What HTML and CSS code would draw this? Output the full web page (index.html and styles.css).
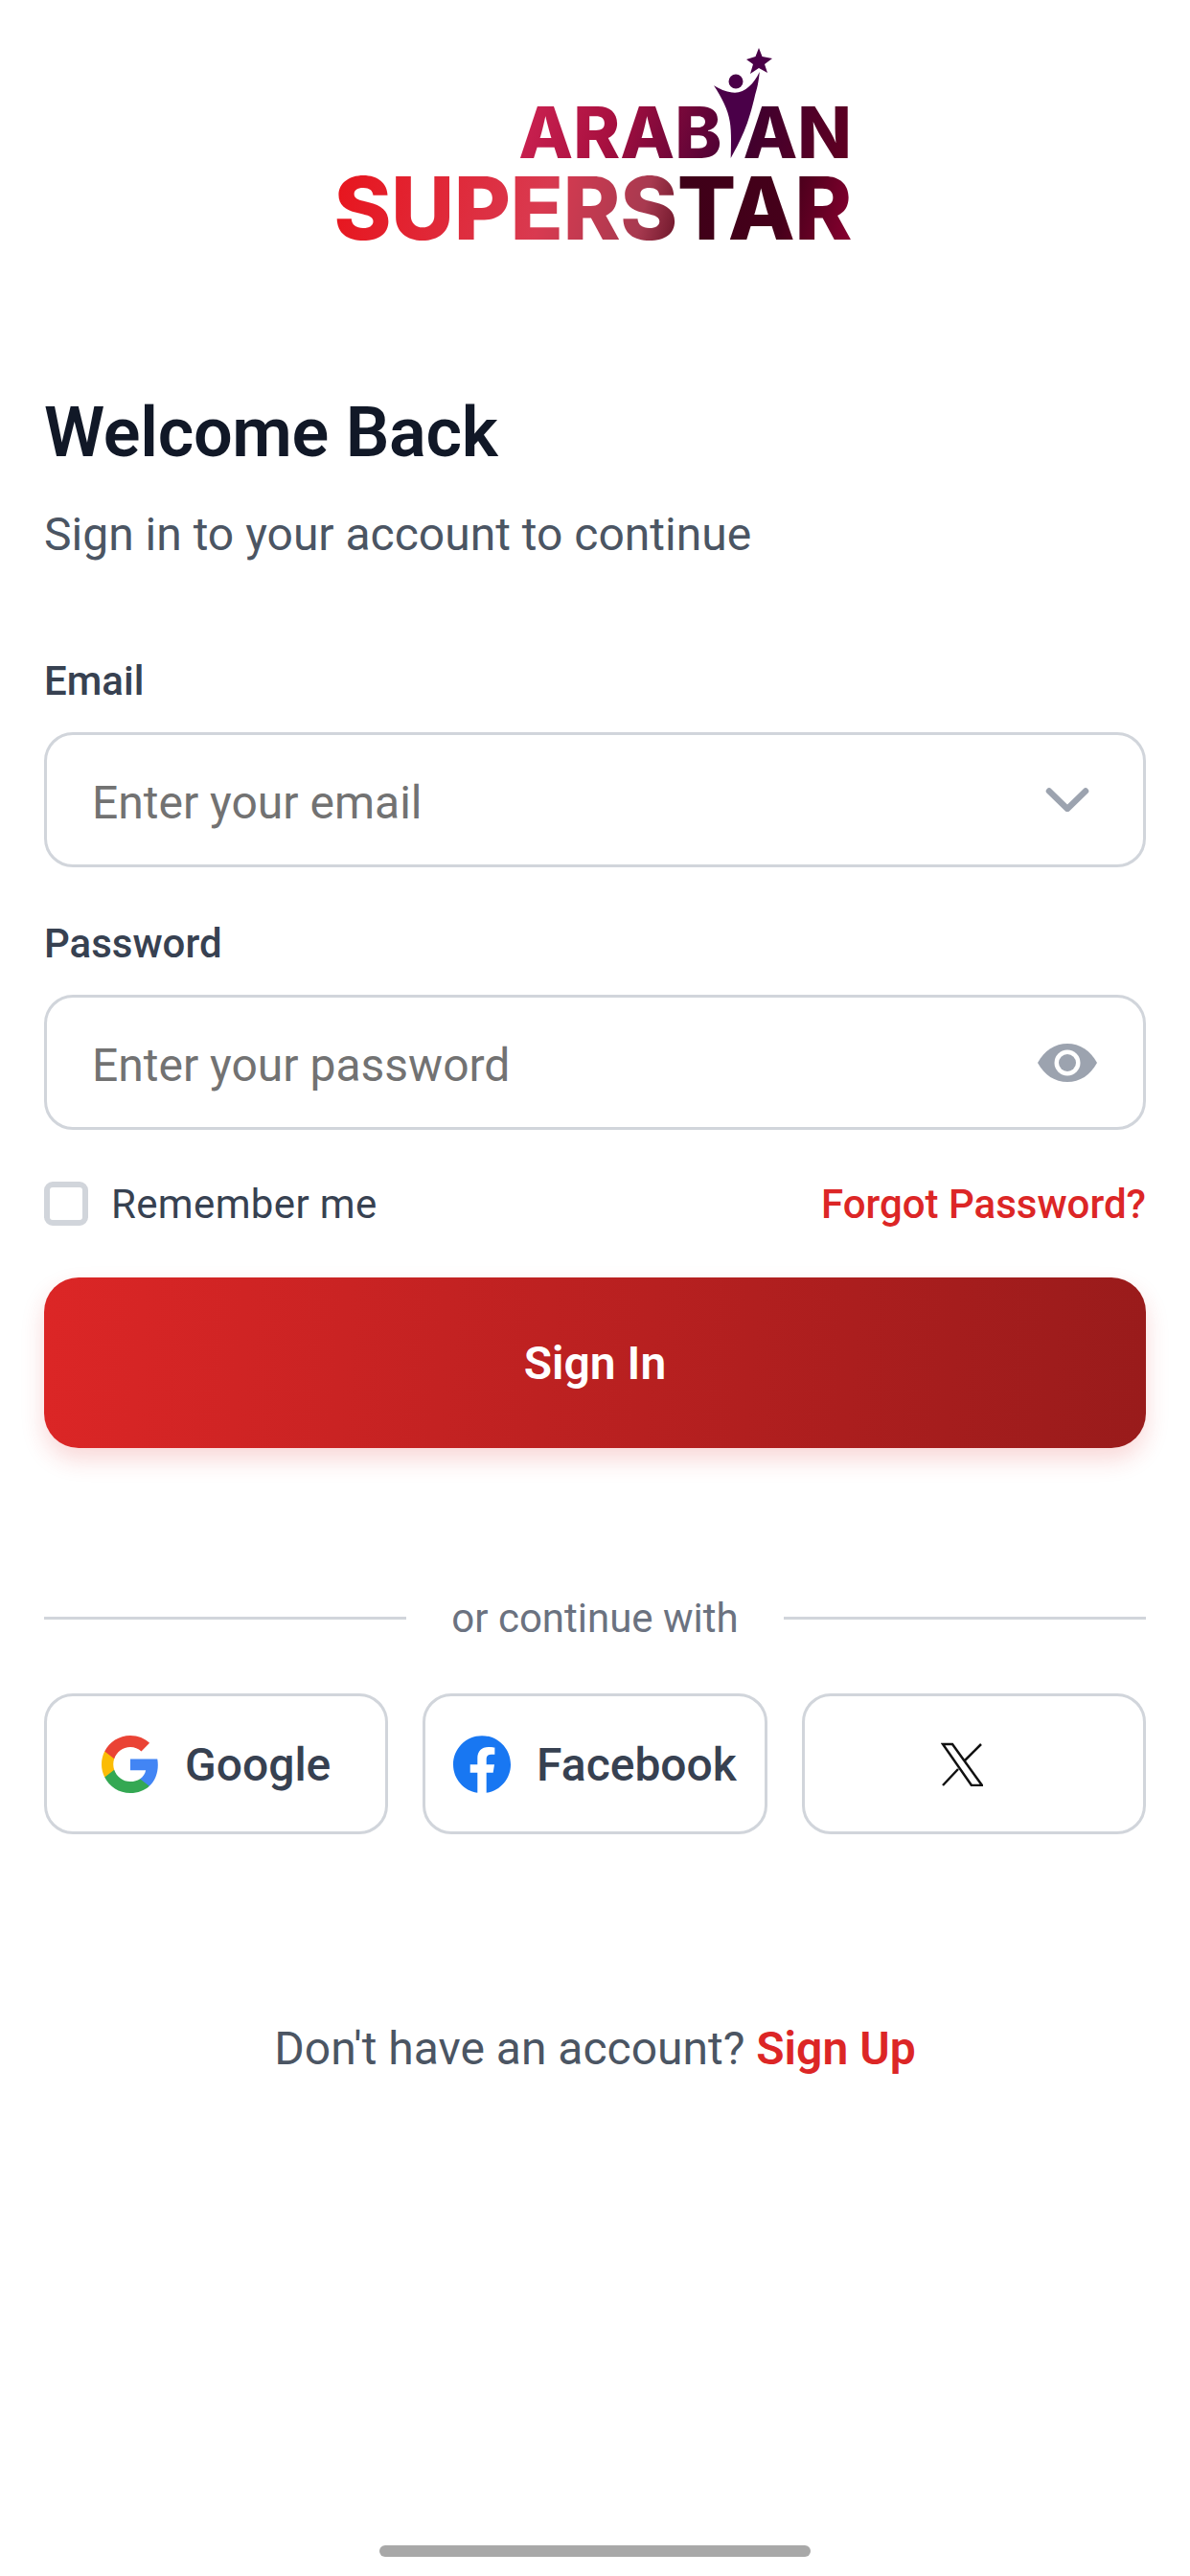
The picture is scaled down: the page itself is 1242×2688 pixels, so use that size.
FILE: index.html
```html
<!DOCTYPE html>
<html>
<head>
    <title>Sign In</title>
    <link rel="stylesheet" href="styles.css">
</head>
<body>
    <div class="screen">
        <div class="logo">
            <div class="logo-top">
                <span class="logo-arab">ARAB</span>
                <span class="logo-i">
                    <span class="logo-i-letter">I</span>
                    <svg class="logo-figure" width="70" height="125" viewBox="0 0 70 125">
                        <path fill="#4a0048" d="M52 5l3.500 9L66 16l-8 6 3 9-9-5-9 6 3-10-7-5 9.500-3z"/>
                        <circle fill="#4a0048" cx="28" cy="40" r="7.500"/>
                        <path fill="#4a0048" d="M5 44.300C12 48.500 19 51.700 27 51.700 38 51.700 47 42 52.700 30 52 40 50 48 48.300 53.300 45 68 41 82 36.700 91.700 32 103 27 112 22.700 120 23 105 23.500 92 21.700 81.700 20 70 13 56 5 44.300Z"/>
                    </svg>
                </span>
                <span class="logo-an">AN</span>
            </div>
            <div class="logo-bottom">
                <span class="logo-super">SUPERS</span><span class="logo-tar">TAR</span>
            </div>
        </div>

        <h1 class="title">Welcome Back</h1>
        <p class="subtitle">Sign in to your account to continue</p>

        <label class="field-label label-email">Email</label>
        <div class="field">
            <span class="placeholder">Enter your email</span>
            <svg width="64" height="25" viewBox="0 0 64 25">
                <path d="M13 3.500l19 18.500L51 3.500" fill="none" stroke="#9ca3af" stroke-width="6.500" stroke-linecap="round" stroke-linejoin="round"/>
            </svg>
        </div>

        <label class="field-label label-password">Password</label>
        <div class="field">
            <span class="placeholder">Enter your password</span>
            <svg width="64" height="42" viewBox="0 0 64 42">
                <path fill="#9ca3af" d="M1 21C8 8 19 1 32 1s24 7 31 20C56 34 45 41 32 41S8 34 1 21z"/>
                <circle fill="#fff" cx="32" cy="21" r="13.500"/>
                <circle fill="#9ca3af" cx="32" cy="21" r="9"/>
            </svg>
        </div>

        <div class="options">
            <div class="remember">
                <span class="checkbox"></span>
                <span class="remember-text">Remember me</span>
            </div>
            <a class="forgot">Forgot Password?</a>
        </div>

        <button type="button" class="signin">Sign In</button>

        <div class="divider">
            <span class="divider-line"></span>
            <span class="divider-text">or continue with</span>
            <span class="divider-line"></span>
        </div>

        <div class="socials">
            <button type="button" class="social">
                <svg width="60" height="60" viewBox="1 1 22 22">
                    <path fill="#4285F4" d="M22.560 12.250c0-.780-.070-1.530-.200-2.250H12v4.260h5.920c-.260 1.370-1.040 2.530-2.210 3.310v2.770h3.570c2.080-1.920 3.280-4.740 3.280-8.090z"/>
                    <path fill="#34A853" d="M12 23c2.970 0 5.460-.980 7.280-2.660l-3.570-2.770c-.980.660-2.230 1.060-3.710 1.060-2.860 0-5.290-1.930-6.160-4.530H2.180v2.840C3.990 20.530 7.700 23 12 23z"/>
                    <path fill="#FBBC05" d="M5.840 14.090c-.220-.660-.350-1.360-.350-2.090s.130-1.430.350-2.090V7.070H2.180C1.430 8.550 1 10.220 1 12s.430 3.450 1.180 4.930l2.850-2.220.810-.620z"/>
                    <path fill="#EA4335" d="M12 5.380c1.620 0 3.060.560 4.210 1.640l3.150-3.150C17.450 2.090 14.970 1 12 1 7.700 1 3.990 3.470 2.180 7.070l3.660 2.840c.870-2.600 3.300-4.530 6.160-4.530z"/>
                </svg>
                <span class="social-text">Google</span>
            </button>
            <button type="button" class="social">
                <svg width="60" height="60" viewBox="0 0 24 24">
                    <path fill="#1877F2" d="M24 12.073c0-6.627-5.373-12-12-12s-12 5.373-12 12c0 5.990 4.388 10.954 10.125 11.854v-8.385H7.078v-3.470h3.047V9.430c0-3.007 1.792-4.669 4.533-4.669 1.312 0 2.686.235 2.686.235v2.953H15.830c-1.491 0-1.956.925-1.956 1.874v2.250h3.328l-.532 3.470h-2.796v8.385C19.612 23.027 24 18.062 24 12.073z"/>
                </svg>
                <span class="social-text">Facebook</span>
            </button>
            <button type="button" class="social">
                <svg class="x-icon" width="44" height="46" viewBox="0 0 44 46">
                    <path fill="none" stroke="#111" stroke-width="2.500" d="M2 2h10l31 43H32zM42 2L24 20M18 28L2 45"/>
                </svg>
            </button>
        </div>

        <p class="signup">Don't have an account? <a class="signup-link">Sign Up</a></p>

        <div class="home-bar"></div>
    </div>
</body>
</html>
```

FILE: styles.css
```css
* {
    box-sizing: border-box;
}

body {
    margin: 0;
    background-color: #fff;
    font-family: Roboto, "Noto Sans", sans-serif;
}

.screen {
    display: flex;
    flex-direction: column;
    height: 2688px;
    padding: 0 46px 20px;
    overflow: hidden;
}

.logo {
    display: flex;
    flex-direction: column;
    align-items: flex-end;
    align-self: center;
    width: 534px;
    margin: 99px 0 0 2px;
    font-family: Inter, sans-serif;
    font-weight: 800;
}

.logo-top {
    display: flex;
    align-items: center;
    height: 78px;
    font-size: 74px;
    line-height: 78px;
}

.logo-bottom {
    display: flex;
    height: 80px;
    font-size: 91px;
    line-height: 80px;
    letter-spacing: -0.5px;
    white-space: nowrap;
}

.logo-arab, .logo-an, .logo-super, .logo-tar {
    display: block;
    -webkit-background-clip: text;
    background-clip: text;
    color: transparent;
}

.logo-arab {
    background-image: linear-gradient(110deg, #d02452, #a81040 45%, #4a0034);
}

.logo-an {
    background-image: linear-gradient(110deg, #3a0030, #620020);
}

.logo-super {
    background-image: linear-gradient(105deg, #e8141c 0%, #d93a50 60%, #a83a50 88%, #6a1428 100%);
}

.logo-tar {
    background-image: linear-gradient(105deg, #3e0018 0%, #45001a 60%, #8a0030 100%);
}

.logo-i {
    position: relative;
    display: block;
    width: 22px;
}

.logo-i-letter {
    visibility: hidden;
}

.logo-figure {
    position: absolute;
    left: -13px;
    top: -54px;
}

.title {
    margin: 153px 0 0;
    font-size: 72px;
    line-height: 84px;
    font-weight: 600;
    letter-spacing: -0.3px;
    color: #111827;
}

.subtitle {
    margin: 36px 0 0;
    font-size: 48px;
    line-height: 56px;
    color: #4b5563;
}

.field-label {
    display: block;
    font-size: 42px;
    line-height: 50px;
    font-weight: 500;
    color: #374151;
}

.label-email {
    margin-top: 100px;
}

.label-password {
    margin-top: 55px;
}

.field {
    display: flex;
    align-items: center;
    justify-content: space-between;
    height: 141px;
    margin-top: 28px;
    padding: 0 47px;
    border: 3px solid #d1d5db;
    border-radius: 30px;
}

.placeholder {
    padding-top: 6px;
    font-size: 48px;
    color: #727272;
}

.options {
    display: flex;
    align-items: center;
    justify-content: space-between;
    margin-top: 50px;
    height: 54px;
    font-size: 42px;
    color: #374151;
}

.remember {
    display: flex;
    align-items: center;
    gap: 24px;
}

.remember-text {
    letter-spacing: 0.35px;
}

.checkbox {
    width: 46px;
    height: 46px;
    border: 6px solid #d1d5db;
    border-radius: 9px;
}

.forgot {
    font-weight: 500;
    color: #dc2626;
}

.signin {
    height: 178px;
    margin-top: 50px;
    border: 0;
    border-radius: 36px;
    background: linear-gradient(95deg, #dc2626, #991b1b);
    box-shadow: 0 12px 24px rgba(220, 38, 38, 0.18);
    font-family: inherit;
    font-size: 48px;
    font-weight: 600;
    color: #fff;
}

.divider {
    display: flex;
    align-items: center;
    gap: 47px;
    margin-top: 152px;
    height: 50px;
}

.divider-line {
    flex: 1;
    height: 3px;
    background-color: #d1d5db;
}

.divider-text {
    font-size: 42px;
    color: #6b7280;
}

.socials {
    display: grid;
    grid-template-columns: repeat(3, 1fr);
    gap: 36px;
    margin-top: 54px;
}

.social {
    display: flex;
    align-items: center;
    justify-content: center;
    gap: 27px;
    height: 147px;
    padding: 0;
    border: 3px solid #d1d5db;
    border-radius: 30px;
    background-color: #fff;
    font-family: inherit;
    font-size: 48px;
    font-weight: 500;
    color: #374151;
}

.social-text {
    padding-top: 2px;
}

.x-icon {
    margin-right: 24px;
}

.signup {
    margin: 196px 0 0;
    text-align: center;
    font-size: 48px;
    line-height: 56px;
    color: #4b5563;
}

.signup-link {
    font-weight: 600;
    color: #dc2626;
}

.home-bar {
    width: 450px;
    height: 12px;
    margin: auto auto 0;
    border-radius: 6px;
    background-color: #a8a8a8;
}
```
